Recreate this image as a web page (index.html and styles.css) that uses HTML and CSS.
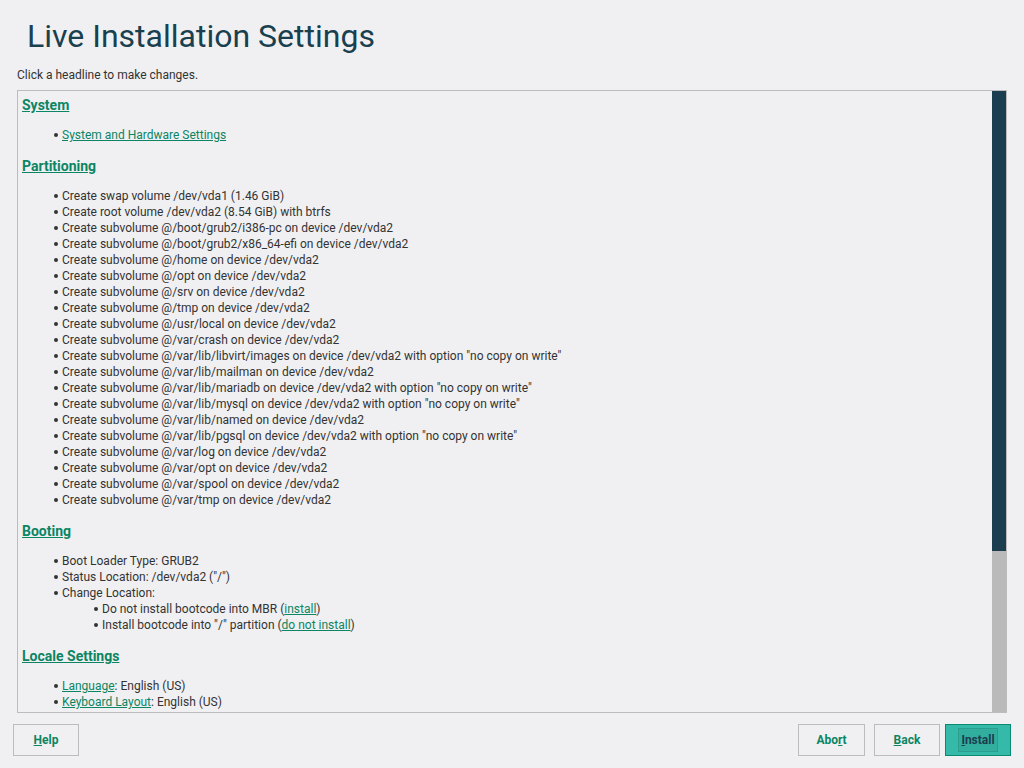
FILE: index.html
```html
<!DOCTYPE html>
<html>
<head>
<meta charset="utf-8">
<link rel="stylesheet" href="styles.css">
</head>
<body>
<div class="page">
  <h1 class="title">Live Installation Settings</h1>
  <p class="hint">Click a headline to make changes.</p>
  <div class="panel">
    <div class="content">
      <h3><a href="#">System</a></h3>
      <ul>
        <li><a href="#">System and Hardware Settings</a></li>
      </ul>
      <h3><a href="#">Partitioning</a></h3>
      <ul>
        <li>Create swap volume /dev/vda1 (1.46 GiB)</li>
        <li>Create root volume /dev/vda2 (8.54 GiB) with btrfs</li>
        <li>Create subvolume @/boot/grub2/i386-pc on device /dev/vda2</li>
        <li>Create subvolume @/boot/grub2/x86_64-efi on device /dev/vda2</li>
        <li>Create subvolume @/home on device /dev/vda2</li>
        <li>Create subvolume @/opt on device /dev/vda2</li>
        <li>Create subvolume @/srv on device /dev/vda2</li>
        <li>Create subvolume @/tmp on device /dev/vda2</li>
        <li>Create subvolume @/usr/local on device /dev/vda2</li>
        <li>Create subvolume @/var/crash on device /dev/vda2</li>
        <li>Create subvolume @/var/lib/libvirt/images on device /dev/vda2 with option "no copy on write"</li>
        <li>Create subvolume @/var/lib/mailman on device /dev/vda2</li>
        <li>Create subvolume @/var/lib/mariadb on device /dev/vda2 with option "no copy on write"</li>
        <li>Create subvolume @/var/lib/mysql on device /dev/vda2 with option "no copy on write"</li>
        <li>Create subvolume @/var/lib/named on device /dev/vda2</li>
        <li>Create subvolume @/var/lib/pgsql on device /dev/vda2 with option "no copy on write"</li>
        <li>Create subvolume @/var/log on device /dev/vda2</li>
        <li>Create subvolume @/var/opt on device /dev/vda2</li>
        <li>Create subvolume @/var/spool on device /dev/vda2</li>
        <li>Create subvolume @/var/tmp on device /dev/vda2</li>
      </ul>
      <h3><a href="#">Booting</a></h3>
      <ul>
        <li>Boot Loader Type: GRUB2</li>
        <li>Status Location: /dev/vda2 ("/")</li>
        <li>Change Location:
          <ul class="sub">
            <li>Do not install bootcode into MBR (<a href="#">install</a>)</li>
            <li>Install bootcode into "/" partition (<a href="#">do not install</a>)</li>
          </ul>
        </li>
      </ul>
      <h3><a href="#">Locale Settings</a></h3>
      <ul>
        <li><a href="#">Language</a>: English (US)</li>
        <li><a href="#">Keyboard Layout</a>: English (US)</li>
      </ul>
      <h3><a href="#">Software</a></h3>
      <ul>
        <li>Product: openSUSE</li>
      </ul>
    </div>
    <div class="scrollbar"><div class="thumb"></div></div>
  </div>
  <div class="buttons">
    <button class="btn"><span class="u">H</span>elp</button>
    <div class="spacer"></div>
    <button class="btn abort">Abo<span class="u">r</span>t</button>
    <button class="btn back"><span class="u">B</span>ack</button>
    <button class="btn primary"><span class="focus"><span class="u">I</span>nstall</span></button>
  </div>
</div>
</body>
</html>
```

FILE: styles.css
```css
html, body {
  margin: 0;
  padding: 0;
  background: #f0f0f2;
}
body {
  font-family: Roboto, "Liberation Sans", sans-serif;
  color: #333333;
  width: 1024px;
  height: 768px;
  overflow: hidden;
}
.page {
  display: flex;
  flex-direction: column;
  height: 768px;
}
.title {
  margin: 17px 0 0 27px;
  font-size: 32px;
  line-height: 38px;
  font-weight: 400;
  color: #18404f;
}
.hint {
  margin: 12px 0 7px 17px;
  font-size: 12px;
  line-height: 16px;
  color: #333;
}
.panel {
  margin: 0 0 0 17px;
  width: 990px;
  height: 623px;
  box-sizing: border-box;
  border: 1px solid #bcbcbc;
  display: flex;
  flex: none;
}
.content {
  flex: 1;
  overflow: hidden;
  padding: 5px 4px 0 4px;
}
.scrollbar {
  width: 14px;
  background: #bababa;
  flex: none;
}
.thumb {
  height: 460px;
  background: #1a3d4f;
}
h3 {
  margin: 0;
  font-size: 14px;
  line-height: 18px;
  font-weight: 700;
}
a {
  color: #0b8563;
  text-decoration: underline;
}
ul {
  margin: 13px 0 14px 0;
  padding: 0 0 0 40px;
  list-style: none;
  font-size: 12px;
  line-height: 16px;
}
li {
  position: relative;
}
li::before {
  content: "";
  position: absolute;
  left: -8px;
  top: 6px;
  width: 4px;
  height: 4px;
  border-radius: 50%;
  background: #333;
}
ul.sub {
  margin: 0;
  padding-left: 40px;
}
.buttons {
  display: flex;
  align-items: center;
  margin: 11px 13px 0 13px;
}
.spacer {
  flex: 1;
}
.btn {
  width: 66px;
  height: 32px;
  box-sizing: border-box;
  border: 1px solid #bcbcbc;
  background: #f0f0f2;
  color: #0b8563;
  font-family: Roboto, "Liberation Sans", sans-serif;
  font-size: 12px;
  font-weight: 700;
  padding: 0;
  display: flex;
  align-items: center;
  justify-content: center;
  flex: none;
}
.btn .u {
  text-decoration: underline;
}
.btn.abort {
  width: 67px;
  margin-right: 9px;
}
.btn.back {
  margin-right: 5px;
}
.btn.primary {
  background: #35b9a8;
  border-color: #0a8a70;
  color: #1a3d4f;
}
.focus {
  display: flex;
  align-items: center;
  justify-content: center;
  box-sizing: border-box;
  width: 40px;
  height: 24px;
  border: 1px solid #2a9d8f;
  background: #32ae9f;
}
```
